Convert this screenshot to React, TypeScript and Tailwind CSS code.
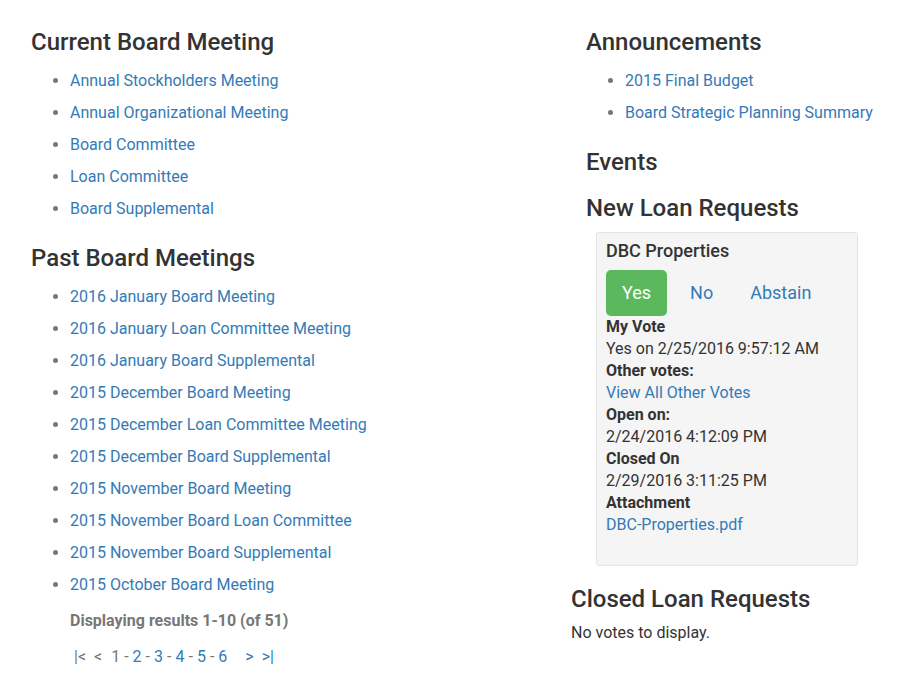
import React from "react";

const current = [
  "Annual Stockholders Meeting",
  "Annual Organizational Meeting",
  "Board Committee",
  "Loan Committee",
  "Board Supplemental",
];

const past = [
  "2016 January Board Meeting",
  "2016 January Loan Committee Meeting",
  "2016 January Board Supplemental",
  "2015 December Board Meeting",
  "2015 December Loan Committee Meeting",
  "2015 December Board Supplemental",
  "2015 November Board Meeting",
  "2015 November Board Loan Committee",
  "2015 November Board Supplemental",
  "2015 October Board Meeting",
];

const announcements = ["2015 Final Budget", "Board Strategic Planning Summary"];

function H({ children, className = "" }: { children: React.ReactNode; className?: string }) {
  return (
    <h3 className={"text-[24px] leading-[32px] font-medium text-[#333] " + className}>{children}</h3>
  );
}

function LinkList({ items }: { items: string[] }) {
  return (
    <ul className="list-disc pl-[39px] marker:text-[#777]">
      {items.map((t) => (
        <li key={t} className="text-[16px] leading-[32px]">
          <a href="#" className="text-[#337ab7]">{t}</a>
        </li>
      ))}
    </ul>
  );
}

export default function App() {
  return (
    <div
      className="w-[905px] h-[696px] bg-white text-[#333] flex"
      style={{ fontFamily: "Roboto, 'Helvetica Neue', Arial, sans-serif" }}
    >
      <div className="w-[571px] pl-[31px] pt-[26px] shrink-0">
        <H>Current Board Meeting</H>
        <div className="mt-[7px]">
          <LinkList items={current} />
        </div>
        <H className="mt-[17px]">Past Board Meetings</H>
        <div className="mt-[7px]">
          <LinkList items={past} />
        </div>
        <div className="pl-[39px] text-[16px] leading-[32px] font-bold text-[#777] mt-[4px]">
          Displaying results 1-10 (of 51)
        </div>
        <div className="pl-[43px] text-[16px] leading-[32px] text-[#777] mt-[4px] flex items-baseline">
          <span>|&lt;</span>
          <span className="ml-[8px]">&lt;</span>
          <span className="ml-[9px]">1</span>
          <span className="mx-[4px]">-</span>
          <a href="#" className="text-[#337ab7]">2</a>
          <span className="mx-[4px]">-</span>
          <a href="#" className="text-[#337ab7]">3</a>
          <span className="mx-[4px]">-</span>
          <a href="#" className="text-[#337ab7]">4</a>
          <span className="mx-[4px]">-</span>
          <a href="#" className="text-[#337ab7]">5</a>
          <span className="mx-[4px]">-</span>
          <a href="#" className="text-[#337ab7]">6</a>
          <a href="#" className="text-[#337ab7] ml-[18px]">&gt;</a>
          <a href="#" className="text-[#337ab7] ml-[8px]">&gt;|</a>
        </div>
      </div>
      <div className="pt-[26px] flex-1">
        <div className="pl-[15px]">
          <H>Announcements</H>
          <div className="mt-[7px]">
            <LinkList items={announcements} />
          </div>
          <H className="mt-[17px]">Events</H>
          <H className="mt-[14px]">New Loan Requests</H>
          <div className="ml-[10px] mt-[8px] w-[262px] h-[334px] bg-[#f5f5f5] border border-[#e3e3e3] rounded-[3px] pt-[6px] px-[9px]">
            <div className="text-[18px] leading-[24px] font-medium">DBC Properties</div>
            <div className="flex mt-[7px] text-[18px]">
              <button className="h-[46px] px-[16px] pb-[2px] rounded-[5px] bg-[#5cb85c] text-white">Yes</button>
              <button className="h-[46px] px-[16px] pb-[2px] ml-[7px] text-[#337ab7]">No</button>
              <button className="h-[46px] px-[16px] pb-[2px] ml-[5px] text-[#337ab7]">Abstain</button>
            </div>
            <div className="text-[16px] leading-[22px]">
              <div className="font-bold">My Vote</div>
              <div>Yes on 2/25/2016 9:57:12 AM</div>
              <div className="font-bold">Other votes:</div>
              <a href="#" className="block text-[#337ab7]">View All Other Votes</a>
              <div className="font-bold">Open on:</div>
              <div>2/24/2016 4:12:09 PM</div>
              <div className="font-bold">Closed On</div>
              <div>2/29/2016 3:11:25 PM</div>
              <div className="font-bold">Attachment</div>
              <a href="#" className="block text-[#337ab7]">DBC-Properties.pdf</a>
            </div>
          </div>
        </div>
        <H className="mt-[17px]">Closed Loan Requests</H>
        <div className="text-[16px] leading-[22px] mt-[7px]">No votes to display.</div>
      </div>
    </div>
  );
}
